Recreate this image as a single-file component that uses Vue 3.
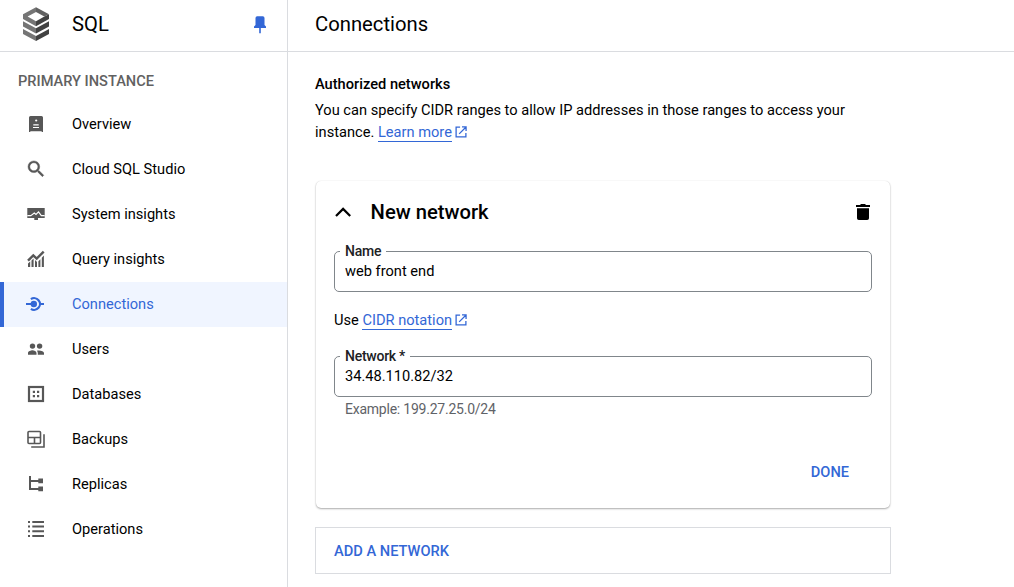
<script setup>
import { ref } from 'vue'

const items = ['Overview', 'Cloud SQL Studio', 'System insights', 'Query insights', 'Connections', 'Users', 'Databases', 'Backups', 'Replicas', 'Operations']
const active = ref('Connections')
const name = ref('web front end')
const network = ref('34.48.110.82/32')
</script>

<template>
  <div class="page">
    <aside class="sidebar">
      <header class="brand">
        <svg class="logo" width="28" height="36" viewBox="0 0 28 36">
          <path fill="#757575" d="M1 8.2 14 1.2V6L5.6 10.6 14 15.2V20.2L1 13Z" />
          <path fill="#424242" d="M27 8.2V13L14 20.2V15.2L22.4 10.6Z" />
          <path fill="#616161" d="M14 1.2 27 8.2 22.4 10.6 14 6Z" />
          <path fill="#757575" d="M1 15.2 14 22.3V27.4L1 20.5ZM1 23 14 30V35L1 28Z" />
          <path fill="#424242" d="M27 15.2 14 22.3V27.4L27 20.5ZM27 23 14 30V35L27 28Z" />
        </svg>
        <span class="product">SQL</span>
        <svg class="pin" width="12" height="18" viewBox="0 0 12 18">
          <path fill="#3367d6" d="M1.5 2Q1.5 .3 3.2 .3H8.8Q10.5 .3 10.5 2V9L12 10.6V12H6.8V17.2H5.2V12H0V10.6L1.5 9Z" />
        </svg>
      </header>
      <h2 class="section">PRIMARY INSTANCE</h2>
      <nav>
        <a v-for="item in items" :key="item" class="item" :class="{ active: item === active }" @click="active = item">
          <svg class="icon" width="24" height="24" viewBox="0 0 24 24" fill="currentColor">
            <template v-if="item === 'Overview'">
              <path d="M5 5.5Q5 4 6.5 4H17.5Q19 4 19 5.5V20H17.7V19.2H6.3V20H5Z" />
              <g fill="#fff"><circle cx="12.2" cy="8.5" r="1.1" /><path d="M9.3 12.3H14.7V13.4H9.3ZM9 14.9H15V16H9Z" /></g>
            </template>
            <path v-else-if="item === 'Cloud SQL Studio'" transform="translate(1.3 1.2) scale(.9)" stroke="currentColor" stroke-width=".5" d="M15.5 14h-.79l-.28-.27A6.47 6.47 0 0 0 16 9.5 6.5 6.5 0 1 0 9.5 16c1.61 0 3.09-.59 4.23-1.57l.27.28v.79l5 4.99L20.49 19l-4.99-5zm-6 0C7.01 14 5 11.99 5 9.5S7.01 5 9.5 5 14 7.01 14 9.5 11.99 14 9.5 14z" />
            <template v-else-if="item === 'System insights'">
              <path d="M3.3 6H20.7V16H14V18H10.3V16H3.3Z" />
              <path d="M3.3 13.6H6.8L10.3 11 12 12.4 14.5 9.8 17.3 13.6H20.7" fill="none" stroke="#fff" stroke-width="1.1" />
            </template>
            <template v-else-if="item === 'Query insights'">
              <path d="M4 16.5 6.2 14.5V20H4ZM7.5 13.4 9.6 11.6V20H7.5ZM11 13 13 14.9V20H11ZM14.4 14.2 16.4 12.3V20H14.4ZM17.8 10.8 19.9 8.6V20H17.8Z" />
              <path d="M4 13.6 9.3 8.4 12.7 11.6 19.7 4.6" fill="none" stroke="currentColor" stroke-width="2.4" />
            </template>
            <template v-else-if="item === 'Connections'">
              <circle cx="9.8" cy="12" r="3.2" />
              <path d="M2 12H9M16 12H20M6.9 7.2A5.8 5.8 0 1 1 6.9 16.8" fill="none" stroke="currentColor" stroke-width="2.2" />
            </template>
            <template v-else-if="item === 'Users'">
              <circle cx="8.5" cy="9.1" r="2.7" /><circle cx="15.6" cy="9.1" r="2.7" />
              <path d="M4 17.7V16C4 14.2 7 13.3 8.5 13.3S12.5 14.2 12.5 16V17.7ZM13.8 17.7V16C13.8 15 13.4 14.3 12.9 13.7 16 12.9 20 14.2 20 16V17.7Z" />
            </template>
            <template v-else-if="item === 'Databases'">
              <rect x="5" y="5" width="14" height="14" fill="none" stroke="currentColor" stroke-width="2.2" />
              <path d="M8.8 8.8H11V11H8.8ZM13 8.8H15.2V11H13ZM8.8 13H11V15.2H8.8ZM13 13H15.2V15.2H13Z" />
            </template>
            <g v-else-if="item === 'Backups'" fill="none" stroke="currentColor" stroke-width="1.6">
              <rect x="4" y="4.5" width="12.5" height="12" rx="1" />
              <path d="M4 10.5H16.5M10.5 10.5V16.5M20 7.3V20H7.2" />
            </g>
            <template v-else-if="item === 'Replicas'">
              <path d="M6 4V17H15M6 9H15" fill="none" stroke="currentColor" stroke-width="2" />
              <path d="M14.3 6.5H19V11.2H14.3ZM14.3 14.5H19V19.2H14.3Z" />
            </template>
            <path v-else d="M4 4H6V6H4ZM8.3 4H20V6H8.3ZM4 8.6H6V10.6H4ZM8.3 8.6H20V10.6H8.3ZM4 13.3H6V15.3H4ZM8.3 13.3H20V15.3H8.3ZM4 18H6V20H4ZM8.3 18H20V20H8.3Z" />
          </svg>
          <span>{{ item }}</span>
        </a>
      </nav>
    </aside>

    <main class="main">
      <header class="title">Connections</header>
      <section class="content">
        <h3 class="heading">Authorized networks</h3>
        <p class="intro">
          You can specify CIDR ranges to allow IP addresses in those ranges to access your<br />instance.
          <a class="link">Learn more</a><svg class="ext" width="12" height="12" viewBox="0 0 13 13"><path d="M5.5 1.2H1.2V11.8H11.8V7.5M7.6 1H12V5.4M12 1 4.5 8.5" /></svg>
        </p>

        <div class="card">
          <div class="card-head">
            <svg width="18" height="18" viewBox="0 0 18 18"><path d="M2 13 9.1 5.9 16.2 13" fill="none" stroke="#000" stroke-width="2.2" /></svg>
            <h3>New network</h3>
            <svg class="trash" width="14" height="16" viewBox="0 0 14 16"><path d="M1 4.2H13V14.2Q13 16 11.2 16H2.8Q1 16 1 14.2ZM0 1H4L5 0H9L10 1H14V3H0Z" /></svg>
          </div>

          <fieldset class="field">
            <legend>Name</legend>
            <input v-model="name" type="text" />
          </fieldset>

          <p class="hint">Use <a class="link">CIDR notation</a><svg class="ext" width="12" height="12" viewBox="0 0 13 13"><path d="M5.5 1.2H1.2V11.8H11.8V7.5M7.6 1H12V5.4M12 1 4.5 8.5" /></svg></p>

          <fieldset class="field">
            <legend>Network *</legend>
            <input v-model="network" type="text" />
          </fieldset>
          <p class="example">Example: 199.27.25.0/24</p>
          <button class="done">DONE</button>
        </div>

        <button class="add">ADD A NETWORK</button>
      </section>
    </main>
  </div>
</template>

<style>
body { background: #fff; overflow: hidden; }
</style>

<style scoped>
.page { display: flex; width: 1014px; height: 587px; overflow: hidden; font: 400 14.64px/22px Roboto, "Liberation Sans", sans-serif; color: #000; }
.page * { box-sizing: border-box; }
h2, h3, p { margin: 0; }
button { font-family: inherit; color: #3367d6; cursor: pointer; }

.sidebar { flex: none; width: 288px; border-right: 1px solid #dadce0; }
.brand { display: flex; align-items: flex-start; height: 52px; border-bottom: 1px solid #dadce0; padding: 6px 21px 0 22px; }
.logo { flex: none; }
.product { margin: 7px 0 0 22px; font-size: 20.2px; }
.pin { margin: 10px 0 0 auto; }
.section { height: 50px; padding: 18px 0 0 18px; font-size: 14.6px; font-weight: 500; color: #616161; }
.item { display: flex; align-items: flex-start; height: 45px; padding-left: 24px; cursor: pointer; }
.icon { flex: none; margin: 10px 24px 0 0; color: #575757; }
.item span { margin-top: 11px; }
.item.active { border-left: 4px solid #3367d6; padding-left: 20px; background: #f0f5ff; color: #3367d6; }
.item.active .icon { color: #3367d6; }

.main { flex: 1; }
.title { height: 52px; border-bottom: 1px solid #dadce0; padding: 13px 0 0 27px; font-size: 20.25px; }
.content { width: 576px; margin-left: 27px; padding-top: 21px; }
.heading { font-size: 14.64px; line-height: 22px; font-weight: 500; }
.intro { margin-top: 4px; white-space: nowrap; }
.link { color: #3367d6; border-bottom: 1px solid #3367d6; }
.ext { margin-left: 3px; vertical-align: -1px; fill: none; stroke: #3367d6; stroke-width: 1.4; }

.card { height: 327px; margin: 38px 1px 0; padding: 19px 18px 0; border-radius: 5px; box-shadow: 0 1px 2px rgba(0, 0, 0, .32), 0 0 1px rgba(0, 0, 0, .14); }
.card-head { display: flex; align-items: center; height: 23px; }
.card-head h3 { margin-left: 18.6px; font-size: 20.2px; font-weight: 500; }
.trash { margin: 0 2px 0 auto; }
.field { width: 538px; height: 49px; margin: 20px 0 0; padding: 0 5px; border: 1px solid #80868b; border-radius: 5px; min-width: 0; }
.field legend { height: 16px; padding: 0 5px; font-size: 14px; letter-spacing: -.26px; line-height: 17px; font-weight: 500; color: #202124; }
.field input { display: block; width: 100%; height: 24px; padding: 0 5px; border: 0; outline: 0; background: none; font: inherit; color: #000; }
.hint { margin-top: 17px; }
.hint + .field { margin-top: 17px; }
.example { margin: 1px 0 0 11px; font-size: 14px; letter-spacing: -.23px; color: #5f6368; }
.done { display: block; margin: 41px 18px 0 auto; padding: 0 5px; height: 22px; border: 0; background: none; font-size: 14.6px; font-weight: 500; }
.add { display: block; width: 576px; height: 47px; margin-top: 19px; padding: 0 18px; border: 1px solid #dadce0; background: #fff; text-align: left; font-size: 14.64px; font-weight: 500; }
</style>
